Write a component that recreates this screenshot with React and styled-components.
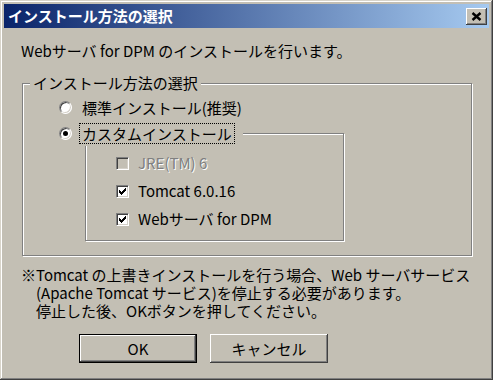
import React from 'react';
import styled, { createGlobalStyle } from 'styled-components';

const FACE = '#c3bfb4';
const FONT = '"Noto Sans CJK JP", "Liberation Sans", sans-serif';

const Global = createGlobalStyle`
  html, body { margin: 0; padding: 0; background: ${FACE}; }
  body { font-family: ${FONT}; font-size: 15px; }
`;

const Window = styled.div`
  box-sizing: border-box;
  width: 493px;
  height: 380px;
  padding: 4px;
  background: ${FACE};
  box-shadow: inset -1px -1px 0 #404040, inset 1px 1px 0 #d8d4ca,
    inset -2px -2px 0 #808080, inset 2px 2px 0 #ffffff;
  display: flex;
  flex-direction: column;
  color: #000;
  font-family: ${FONT};
  font-size: 15px;
`;

const TitleBar = styled.div`
  flex: none;
  height: 24px;
  display: flex;
  align-items: center;
  justify-content: space-between;
  padding: 0 2px 0 4px;
  background: linear-gradient(to right, #0a246a, #a6caf0);
`;

const Title = styled.span`
  color: #fff;
  font-weight: 700;
  font-size: 15px;
  line-height: 24px;
  white-space: nowrap;
`;

const CloseButton = styled.button`
  width: 21px;
  height: 17px;
  padding: 0;
  border: 0;
  background: ${FACE};
  box-shadow: inset -1px -1px 0 #404040, inset 1px 1px 0 #ffffff,
    inset -2px -2px 0 #808080, inset 2px 2px 0 ${FACE};
  display: flex;
  align-items: center;
  justify-content: center;
`;

const Content = styled.div`
  display: flex;
  flex-direction: column;
  padding: 0 17px;
`;

const Intro = styled.div`
  margin-top: 14px;
  line-height: 18px;
  white-space: nowrap;
`;

const GroupBox = styled.fieldset`
  box-sizing: border-box;
  width: 450px;
  min-width: 0;
  margin: 14px 0 0 1px;
  padding: 3px 0 14px 0;
  border: 1px solid #808080;
  box-shadow: inset 1px 1px 0 #fff, 1px 1px 0 #fff;
  display: flex;
  flex-direction: column;
  align-items: flex-start;
`;

const Legend = styled.legend`
  margin-left: 7px;
  padding: 0 3px;
  line-height: 18px;
  background: ${FACE};
  white-space: nowrap;
`;

const OptionRow = styled.div`
  height: 25px;
  display: flex;
  align-items: center;
  padding-left: 36px;
`;

const Radio = styled.span`
  box-sizing: border-box;
  width: 13px;
  height: 13px;
  flex: none;
  border-radius: 50%;
  border: 1px solid;
  border-color: #808080 #ffffff #ffffff #808080;
  box-shadow: inset 1px 1px 0 #404040, inset -1px -1px 0 #d4d0c8;
  background: #fff;
  display: flex;
  align-items: center;
  justify-content: center;
  &::after {
    content: '';
    width: 5px;
    height: 5px;
    border-radius: 50%;
    background: ${(p) => (p.$checked ? '#000' : 'transparent')};
  }
`;

const OptionLabel = styled.span`
  margin-left: 7px;
  padding: 0 2px;
  line-height: 19px;
  border: 1px ${(p) => (p.$focused ? 'dotted #000' : 'solid transparent')};
  white-space: nowrap;
`;

const SubGroup = styled.div`
  box-sizing: border-box;
  width: 259px;
  margin: 13px 0 0 62px;
  padding: 0 0 7px 30px;
  border: 1px solid #808080;
  box-shadow: inset 1px 1px 0 #fff, 1px 1px 0 #fff;
  display: flex;
  flex-direction: column;
  align-items: flex-start;
`;

const SubLegend = styled.div`
  height: 25px;
  margin: -13px 0 3px -57px;
  padding-right: 8px;
  display: flex;
  align-items: center;
  background: ${FACE};
`;

const CheckRow = styled.div`
  height: 28px;
  display: flex;
  align-items: center;
`;

const CheckBox = styled.span`
  box-sizing: border-box;
  width: 13px;
  height: 13px;
  flex: none;
  border: 1px solid;
  border-color: #808080 #ffffff #ffffff #808080;
  box-shadow: inset 1px 1px 0 #404040, inset -1px -1px 0 #d4d0c8;
  background: ${(p) => (p.$disabled ? FACE : '#fff')};
  display: flex;
  align-items: center;
  justify-content: center;
`;

const CheckLabel = styled.span`
  margin-left: 9px;
  line-height: 18px;
  white-space: nowrap;
  color: ${(p) => (p.$disabled ? '#808080' : '#000')};
  text-shadow: ${(p) => (p.$disabled ? '1px 1px 0 #fff' : 'none')};
`;

const Note = styled.div`
  margin-top: 10px;
  display: flex;
  line-height: 18px;
  white-space: nowrap;
`;

const Mark = styled.span`
  flex: none;
`;

const ButtonRow = styled.div`
  margin-top: 14px;
  padding-left: 58px;
  display: flex;
  gap: 13px;
`;

const Button = styled.button`
  box-sizing: border-box;
  width: 118px;
  height: 29px;
  padding: 0;
  font-family: ${FONT};
  font-size: 15px;
  color: #000;
  background: ${FACE};
  border: ${(p) => (p.$default ? '1px solid #000' : '0')};
  box-shadow: inset -1px -1px 0 #404040, inset 1px 1px 0 #ffffff,
    inset -2px -2px 0 #808080, inset 2px 2px 0 ${FACE};
`;

const CheckMark = () => (
  <svg width="7" height="7" viewBox="0 0 7 7" shapeRendering="crispEdges">
    <rect x="6" y="0" width="1" height="1" fill="#000" />
    <rect x="5" y="1" width="2" height="1" fill="#000" />
    <rect x="0" y="2" width="1" height="1" fill="#000" />
    <rect x="4" y="2" width="3" height="1" fill="#000" />
    <rect x="0" y="3" width="2" height="1" fill="#000" />
    <rect x="3" y="3" width="3" height="1" fill="#000" />
    <rect x="0" y="4" width="5" height="1" fill="#000" />
    <rect x="1" y="5" width="3" height="1" fill="#000" />
    <rect x="2" y="6" width="1" height="1" fill="#000" />
  </svg>
);

const CloseGlyph = () => (
  <svg width="11" height="9" viewBox="0 0 11 9">
    <path d="M1.5 1 L9.5 8 M9.5 1 L1.5 8" stroke="#000" strokeWidth="2.4" />
  </svg>
);

export default function App() {
  return (
    <>
      <Global />
      <Window>
        <TitleBar>
          <Title>インストール方法の選択</Title>
          <CloseButton aria-label="閉じる">
            <CloseGlyph />
          </CloseButton>
        </TitleBar>
        <Content>
          <Intro>Webサーバ for DPM のインストールを行います。</Intro>
          <GroupBox>
            <Legend>インストール方法の選択</Legend>
            <OptionRow>
              <Radio />
              <OptionLabel>標準インストール(推奨)</OptionLabel>
            </OptionRow>
            <SubGroup>
              <SubLegend>
                <Radio $checked />
                <OptionLabel $focused>カスタムインストール</OptionLabel>
              </SubLegend>
              <CheckRow>
                <CheckBox $disabled />
                <CheckLabel $disabled>JRE(TM) 6</CheckLabel>
              </CheckRow>
              <CheckRow>
                <CheckBox>
                  <CheckMark />
                </CheckBox>
                <CheckLabel>Tomcat 6.0.16</CheckLabel>
              </CheckRow>
              <CheckRow>
                <CheckBox>
                  <CheckMark />
                </CheckBox>
                <CheckLabel>Webサーバ for DPM</CheckLabel>
              </CheckRow>
            </SubGroup>
          </GroupBox>
          <Note>
            <Mark>※</Mark>
            <span>
              Tomcat の上書きインストールを行う場合、Web サーバサービス
              <br />
              (Apache Tomcat サービス)を停止する必要があります。
              <br />
              停止した後、OKボタンを押してください。
            </span>
          </Note>
          <ButtonRow>
            <Button $default>OK</Button>
            <Button>キャンセル</Button>
          </ButtonRow>
        </Content>
      </Window>
    </>
  );
}
